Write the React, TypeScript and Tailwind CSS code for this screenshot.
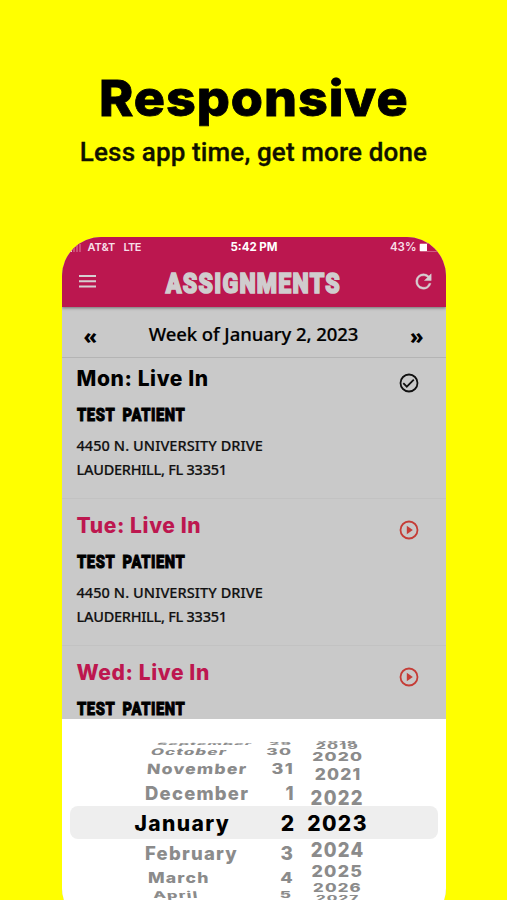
interface Visit {
  day: string;
  done: boolean;
  first?: boolean;
}

interface WheelRow {
  text: string;
  height: number;
  sx: number;
  sy: number;
  shift: number;
  skew?: number;
  active?: boolean;
}

const visits: Visit[] = [
  { day: 'Mon', done: true, first: true },
  { day: 'Tue', done: false },
  { day: 'Wed', done: false },
];

// heights shrink away from the selected row so the column reads as a drum
const months: WheelRow[] = [
  { text: 'September', height: 4, sx: 0.75, sy: 0.15, shift: 23, skew: -8 },
  { text: 'October', height: 12, sx: 0.81, sy: 0.44, shift: 17, skew: -10 },
  { text: 'November', height: 22, sx: 0.84, sy: 0.68, shift: 13, skew: -4 },
  { text: 'December', height: 28, sx: 0.88, sy: 0.88, shift: 11 },
  { text: 'January', height: 32, sx: 1, sy: 1, shift: 1, active: true },
  { text: 'February', height: 28, sx: 0.88, sy: 0.88, shift: 11 },
  { text: 'March', height: 21, sx: 0.84, sy: 0.68, shift: 14 },
  { text: 'April', height: 13, sx: 0.79, sy: 0.44, shift: 19, skew: 4 },
];

const days: WheelRow[] = [
  { text: '29', height: 4, sx: 0.76, sy: 0.15, shift: -2 },
  { text: '30', height: 12, sx: 0.83, sy: 0.44, shift: -2 },
  { text: '31', height: 22, sx: 0.86, sy: 0.68, shift: -1 },
  { text: '1', height: 28, sx: 0.87, sy: 0.88, shift: 0 },
  { text: '2', height: 32, sx: 1, sy: 1, shift: 1, active: true },
  { text: '3', height: 28, sx: 0.9, sy: 0.88, shift: 0 },
  { text: '4', height: 21, sx: 0.86, sy: 0.68, shift: -1 },
  { text: '5', height: 13, sx: 0.82, sy: 0.44, shift: -2 },
];

const years: WheelRow[] = [
  { text: '2018', height: 2, sx: 0.71, sy: 0.12, shift: 0 },
  { text: '2019', height: 7, sx: 0.76, sy: 0.34, shift: 0 },
  { text: '2020', height: 13, sx: 0.83, sy: 0.57, shift: 0 },
  { text: '2021', height: 22, sx: 0.83, sy: 0.76, shift: 1 },
  { text: '2022', height: 24, sx: 0.88, sy: 0.94, shift: 0 },
  { text: '2023', height: 28, sx: 1, sy: 1, shift: 0, active: true },
  { text: '2024', height: 24, sx: 0.88, sy: 0.94, shift: 0 },
  { text: '2025', height: 20, sx: 0.85, sy: 0.76, shift: 0 },
  { text: '2026', height: 13, sx: 0.8, sy: 0.54, shift: 0 },
  { text: '2027', height: 8, sx: 0.73, sy: 0.34, shift: 0 },
];

const origins = {
  left: 'left center',
  right: 'right center',
  center: 'center',
};

function Wheel({ rows, align, className }: { rows: WheelRow[]; align: 'left' | 'right' | 'center'; className: string }) {
  const items = align === 'left' ? 'justify-start' : align === 'right' ? 'justify-end' : 'justify-center';
  return (
    <div className={`flex flex-col ${className}`}>
      {rows.map((row) => (
        <div key={row.text} className={`flex shrink-0 items-center ${items}`} style={{ height: row.height }}>
          <span
            className={`whitespace-nowrap text-[21px] leading-none font-extrabold tracking-[1.4px] ${row.active ? 'text-black' : 'text-[#8b8b8b]'}`}
            style={{
              transform: `translateX(${row.shift}px) scale(${row.sx}, ${row.sy}) skewX(${row.skew ?? 0}deg)`,
              transformOrigin: origins[align],
            }}
          >
            {row.text}
          </span>
        </div>
      ))}
    </div>
  );
}

function StatusBar() {
  return (
    <div className="flex h-[21px] items-center justify-between pl-2 pr-[7px] text-[11px] font-semibold text-[#f7dfe8]">
      <div className="flex w-[130px] items-center">
        <div className="flex h-2 items-end gap-px">
          <i className="h-1 w-[2px] bg-[#f2c9d8]" />
          <i className="h-[5px] w-[2px] bg-[#cc4d78]" />
          <i className="h-[7px] w-[2px] bg-[#cc4d78]" />
          <i className="h-2 w-[2px] bg-[#cc4d78]" />
        </div>
        <span className="ml-[7px]">AT&amp;T</span>
        <span className="ml-2 tracking-[-0.5px]">LTE</span>
      </div>
      <span className="text-[11.5px] font-bold text-white">5:42 PM</span>
      <div className="flex w-[130px] items-center justify-end gap-[3px]">
        <span className="text-[11.5px]">43%</span>
        <span className="flex h-[9px] w-[19px] items-center rounded-[2px] border border-[#cf5a82]">
          <i className="h-[7px] w-[7px] bg-white" />
        </span>
      </div>
    </div>
  );
}

function AppBar() {
  return (
    <div className="flex h-[49px] items-center justify-between pl-[13px] pr-[11px] text-[#d6cfd1]">
      <svg className="mb-[3px]" width="24" height="24" viewBox="0 0 24 24" fill="currentColor">
        <path d="M4 5.9h17v2H4zM4 11.2h17v2H4zM4 16.4h17v2H4z" />
      </svg>
      <h2 className="mr-[3px] flex w-[176px] justify-center pt-[3px] text-[27.5px] leading-none font-black text-[#d0cdce]">
        <span className="inline-block scale-x-[0.84] font-['Roboto',sans-serif] tracking-[1.5px] [-webkit-text-stroke:1.6px_#d0cdce]">
          ASSIGNMENTS
        </span>
      </h2>
      <svg className="mb-[2px]" width="23" height="23" viewBox="0 0 24 24" fill="currentColor" stroke="currentColor" strokeWidth="0.5">
        <path d="M17.65 6.35A7.958 7.958 0 0 0 12 4a8 8 0 1 0 7.73 10h-2.08A6 6 0 1 1 12 6c1.66 0 3.14.69 4.22 1.78L13 11h7V4z" />
      </svg>
    </div>
  );
}

function VisitCard({ day, done, first }: Visit) {
  return (
    <div className={`flex shrink-0 justify-between border-b border-[#c2c2c2] pl-[15px] pr-[27px] ${first ? 'h-[141px] pt-[9px]' : 'h-[146.7px] pt-[15px]'}`}>
      <div>
        <h3 className={`text-[21px] leading-6 font-extrabold tracking-[0.6px] ${done ? 'text-black' : 'text-[#bd174f]'}`}>
          {day}: Live In
        </h3>
        <p className="mt-3 origin-left scale-x-[0.84] font-['Roboto',sans-serif] text-[17.5px] leading-6 font-black tracking-[0.7px] text-black [-webkit-text-stroke:0.9px_black] [word-spacing:4px]">
          TEST PATIENT
        </p>
        <div className="mt-[6px] font-['Noto_Sans',sans-serif] text-[14.5px] leading-6 font-medium text-[#111] [-webkit-text-stroke:0.2px_#111]">
          <p className="tracking-[0.08px]">4450 N. UNIVERSITY DRIVE</p>
          <p className="tracking-[-0.27px]">LAUDERHILL, FL 33351</p>
        </div>
      </div>
      <svg
        className={`mt-[6px] ${done ? 'text-[#111]' : 'text-[#c53c36]'}`}
        width="20"
        height="20"
        viewBox="0 0 20 20"
        fill="none"
        stroke="currentColor"
        strokeWidth="1.8"
      >
        <circle cx="10" cy="10" r="8.5" />
        {done ? <path d="m4.3 10.2 3.5 3.5 7-7" /> : <path d="m7.8 5.8 6 4.2-6 4.2z" fill="currentColor" stroke="none" />}
      </svg>
    </div>
  );
}

function DatePicker() {
  return (
    <div className="relative flex h-[211px] shrink-0 justify-center bg-white pt-[22px]">
      <div className="absolute top-[87px] right-2 left-2 h-[33px] rounded-lg bg-[#eeeeee]" />
      <div className="relative flex h-[161px] w-full">
        <Wheel rows={months} align="left" className="ml-[72px] w-[110px]" />
        <Wheel rows={days} align="right" className="w-[51px]" />
        <Wheel rows={years} align="center" className="ml-[10px] w-[66px]" />
      </div>
    </div>
  );
}

export default function App() {
  return (
    <main className="flex h-[900px] w-[507px] flex-col items-center overflow-hidden bg-[#ffff00] font-['Inter',sans-serif]">
      <header className="flex h-[237px] shrink-0 flex-col items-center pt-[68px]">
        <h1 className="scale-x-[1.04] text-[50px] leading-[60px] font-extrabold tracking-[0.9px] text-black [-webkit-text-stroke:0.8px_black]">
          Responsive
        </h1>
        <p className="mt-[8px] font-['Roboto',sans-serif] text-[26px] leading-8 font-medium tracking-[0.14px] text-[#111100] [-webkit-text-stroke:0.3px_#111100]">
          Less app time, get more done
        </p>
      </header>
      <section className="flex h-[690px] w-[384px] shrink-0 flex-col overflow-hidden rounded-[39px] bg-[#c9c9c9]">
        <div className="relative h-[70px] shrink-0 bg-[#bb174f] shadow-[0_1px_3px_rgba(0,0,0,0.45)]">
          <StatusBar />
          <AppBar />
        </div>
        <div className="flex h-[51px] shrink-0 items-center justify-between border-b border-[#b4b4b4] px-[22px] pt-1 font-['Noto_Sans',sans-serif] text-black">
          <span className="pt-1 text-[21px] leading-none font-extrabold">«</span>
          <span className="text-[18.5px] font-medium tracking-[-0.07px] [-webkit-text-stroke:0.2px_black]">
            Week of January 2, 2023
          </span>
          <span className="pt-1 text-[21px] leading-none font-extrabold">»</span>
        </div>
        <div className="flex h-[361px] shrink-0 flex-col overflow-hidden">
          {visits.map((visit) => (
            <VisitCard key={visit.day} {...visit} />
          ))}
        </div>
        <DatePicker />
      </section>
    </main>
  );
}
